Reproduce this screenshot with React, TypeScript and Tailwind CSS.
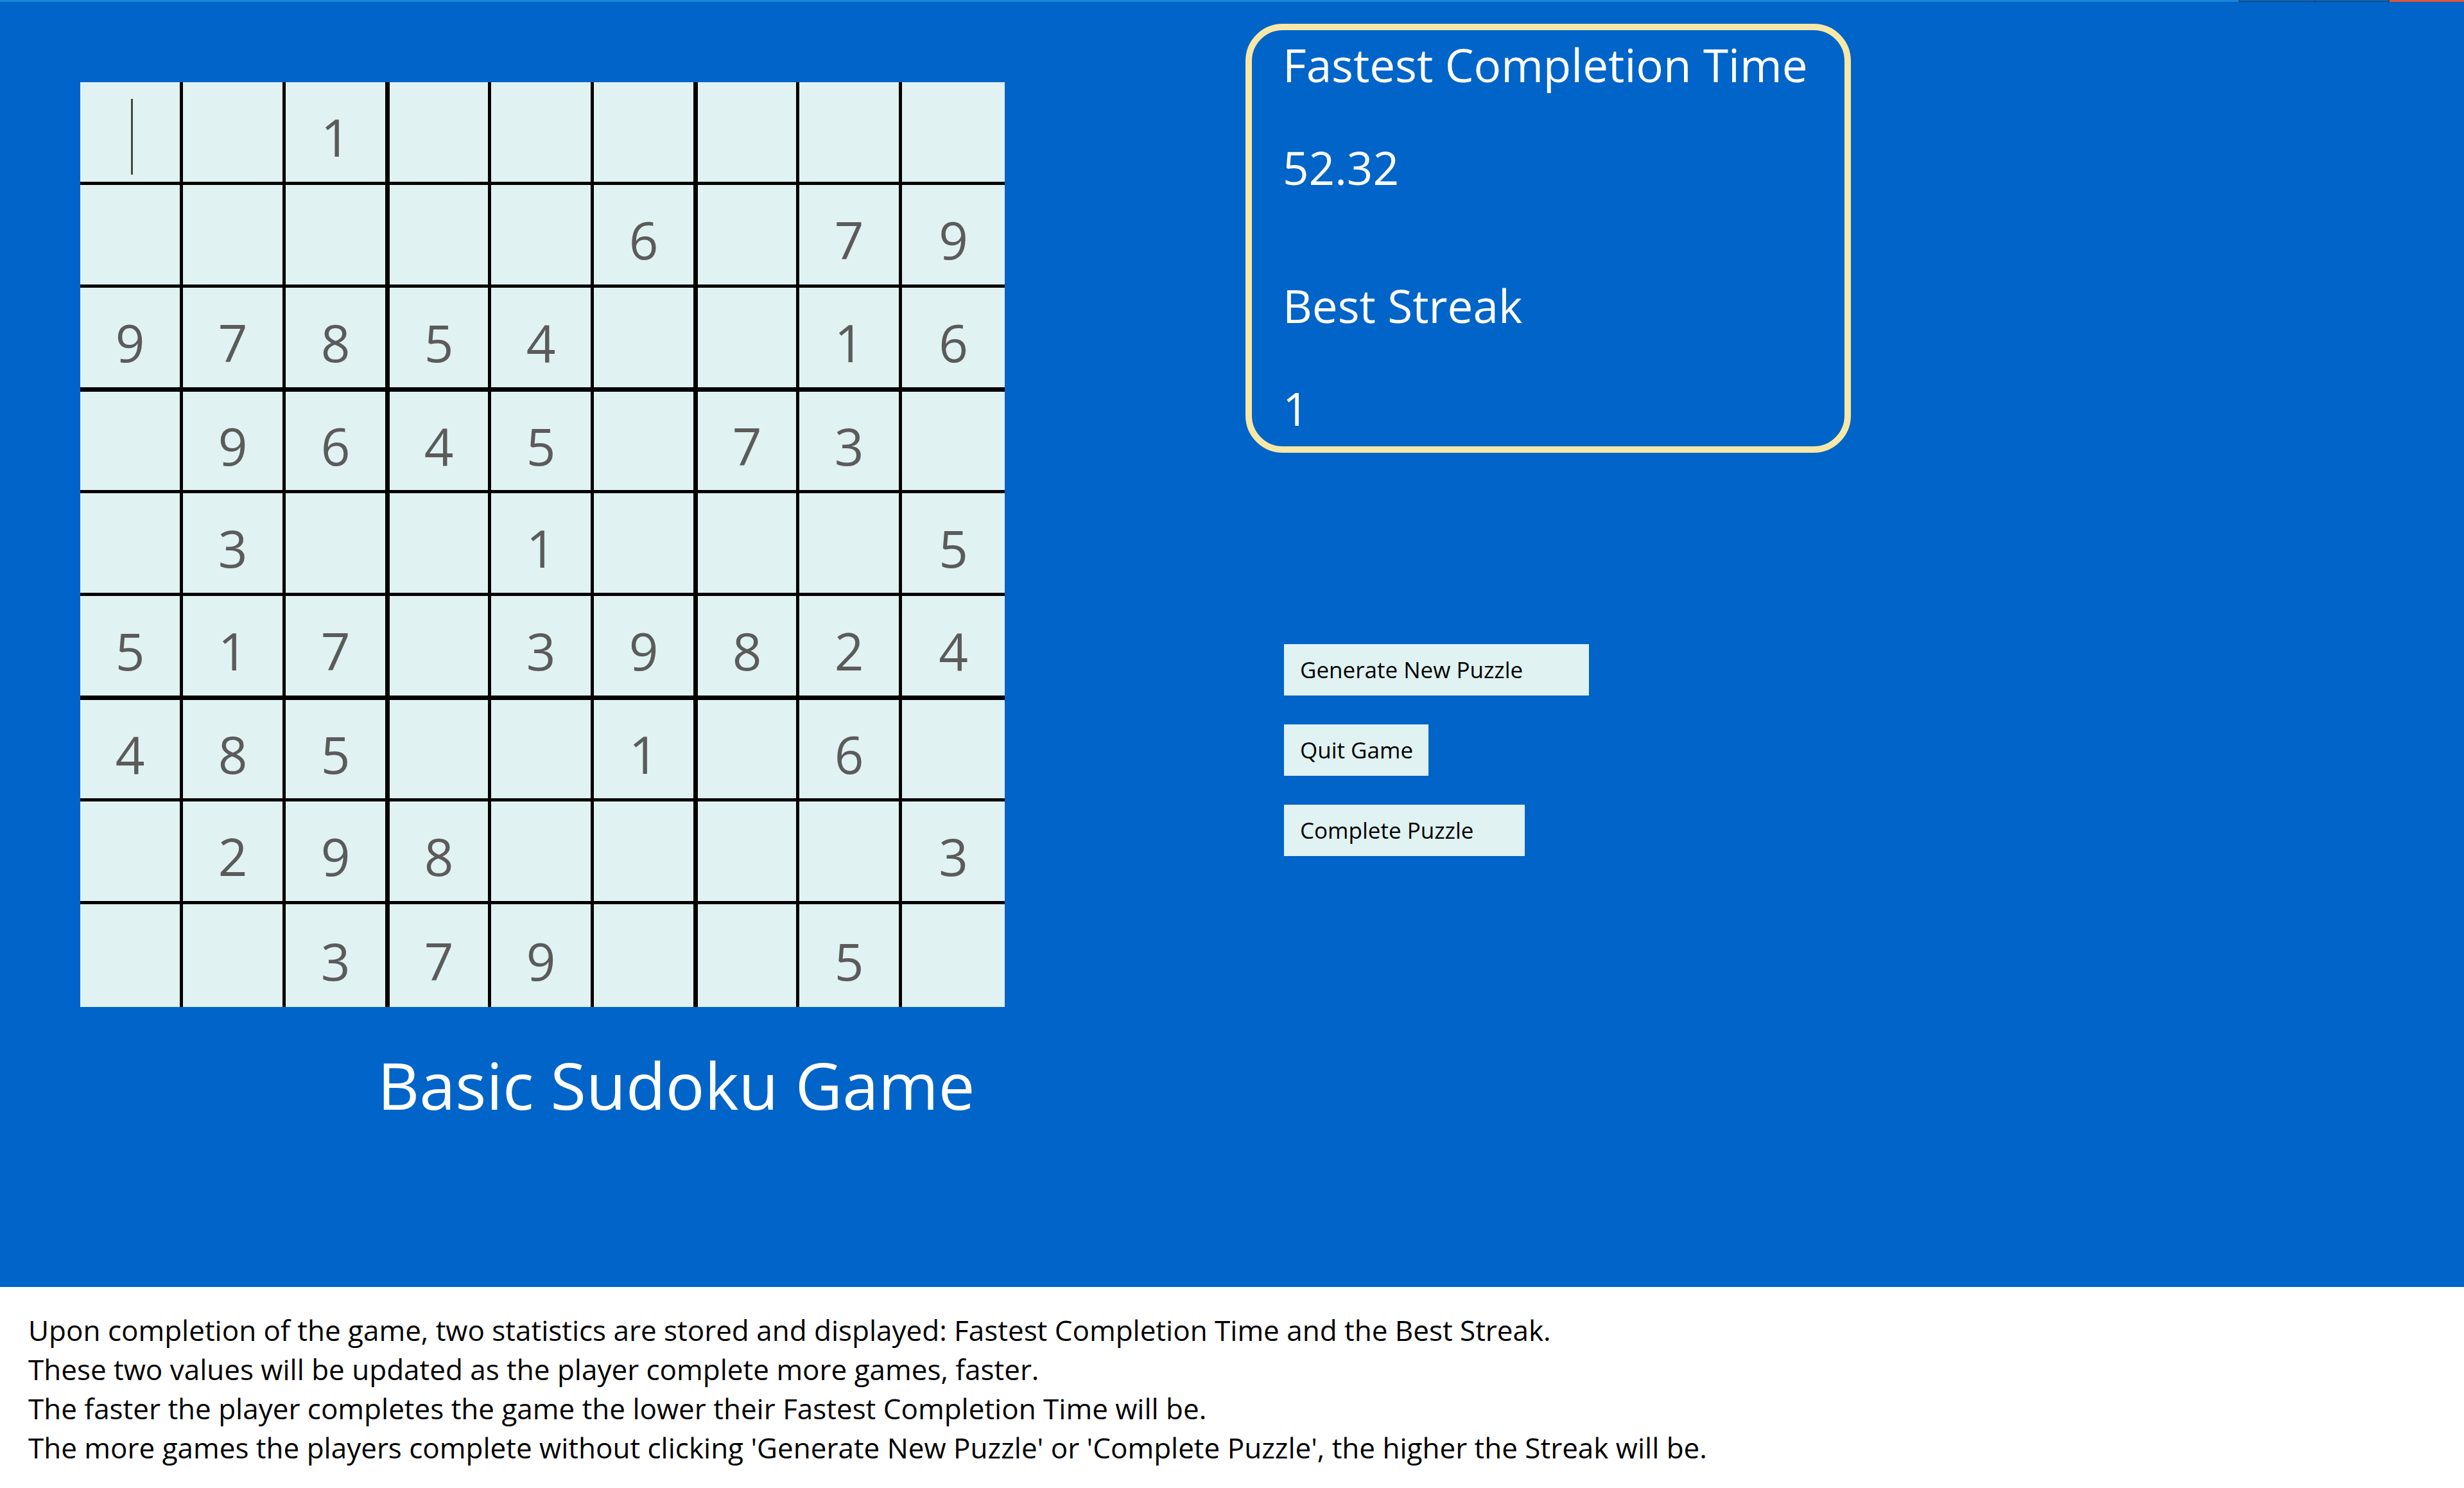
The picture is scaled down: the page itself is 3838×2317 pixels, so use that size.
import React from "react";

const rows: string[] = [
  "  1      ",
  "     6 79",
  "97854  16",
  " 9645 73 ",
  " 3  1   5",
  "517 39824",
  "485  1 6 ",
  " 298    3",
  "  379  5 ",
];

function Cell({ r, c, v }: { r: number; c: number; v: string }) {
  const cls = [
    "flex items-center justify-center bg-[#e0f2f1] border-black text-[80px] leading-none text-[#5b5b5b] pt-[15px]",
    c < 8 ? "border-r-[5px]" : "",
    c === 3 || c === 6 ? "border-l-[2px]" : "",
    r < 8 ? "border-b-[5px]" : "",
    r === 3 || r === 6 ? "border-t-[2px]" : "",
  ].join(" ");
  return (
    <div className={cls}>
      {r === 0 && c === 0 ? (
        <span className="block w-[3px] h-[118px] bg-[#454545] ml-[5px]" />
      ) : (
        <span>{v.trim()}</span>
      )}
    </div>
  );
}

export default function App() {
  return (
    <div className="w-[3838px] h-[2317px] flex flex-col font-['Open_Sans',sans-serif] overflow-hidden">
      <div className="flex-1 flex flex-col bg-[#0064c8]">
        <div className="h-[3px] flex">
          <div className="flex-1 bg-[#1a85d8]" />
          <div className="w-[118px] border-l border-b border-[#333a44]" />
          <div className="w-[116px] border-l border-b border-[#333a44]" />
          <div className="w-[117px] bg-[#d8573e] border-l border-[#333a44]" />
        </div>
        <div className="flex flex-row">
          <div className="ml-[125px] mt-[125px] flex flex-col">
            <div className="grid grid-cols-[repeat(9,160px)] grid-rows-[repeat(9,160px)]">
              {rows.map((row, r) =>
                row.split("").map((v, c) => <Cell key={`${r}-${c}`} r={r} c={c} v={v} />)
              )}
            </div>
            <div className="ml-[463px] mt-[60px] text-[101px] leading-[122px] text-white whitespace-nowrap">
              Basic Sudoku Game
            </div>
          </div>
          <div className="ml-[375px] mt-[34px] flex flex-col items-start">
            <div className="w-[943px] h-[668px] rounded-[58px] border-[10px] border-[#f7e8a7] pt-[14px] px-[48px] text-white text-[71px] leading-[80px] whitespace-nowrap">
              <p>Fastest Completion Time</p>
              <p className="mt-[80px]">52.32</p>
              <p className="mt-[135px]">Best Streak</p>
              <p className="mt-[80px]">1</p>
            </div>
            <div className="ml-[60px] mt-[298px] flex flex-col items-start gap-[45px]">
              <button className="w-[475px] h-[80px] bg-[#e0f2f1] text-black text-[35px] flex items-center pl-[25px]">
                Generate New Puzzle
              </button>
              <button className="w-[225px] h-[80px] bg-[#e0f2f1] text-black text-[35px] flex items-center pl-[25px]">
                Quit Game
              </button>
              <button className="w-[375px] h-[80px] bg-[#e0f2f1] text-black text-[35px] flex items-center pl-[25px]">
                Complete Puzzle
              </button>
            </div>
          </div>
        </div>
      </div>
      <div className="h-[313px] bg-white pt-[37px] pl-[44px] text-black text-[44px] leading-[61px] whitespace-nowrap">
        <p>Upon completion of the game, two statistics are stored and displayed: Fastest Completion Time and the Best Streak.</p>
        <p>These two values will be updated as the player complete more games, faster.</p>
        <p>The faster the player completes the game the lower their Fastest Completion Time will be.</p>
        <p>The more games the players complete without clicking 'Generate New Puzzle' or 'Complete Puzzle', the higher the Streak will be.</p>
      </div>
    </div>
  );
}
